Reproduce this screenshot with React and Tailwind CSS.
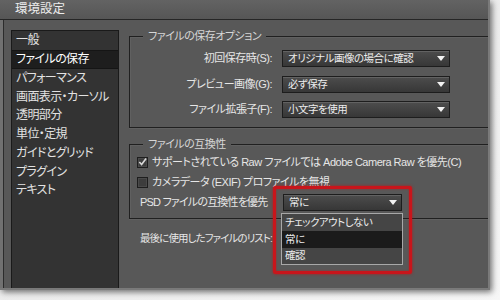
import React from "react";

const FONT = "font-['Liberation_Sans','Noto_Sans_CJK_JP',sans-serif] [font-feature-settings:'palt']";

const menuItems = [
  "一般",
  "ファイルの保存",
  "パフォーマンス",
  "画面表示・カーソル",
  "透明部分",
  "単位・定規",
  "ガイドとグリッド",
  "プラグイン",
  "テキスト",
];

const Arrow = () => (
  <svg width="8" height="5" viewBox="0 0 8 5" className="shrink-0">
    <path d="M0 0 L8 0 L4 5 Z" fill="#f2f2f2" />
  </svg>
);

const Select = ({ value, width }) => (
  <div
    className={`flex items-center justify-between h-[17px] ${width} shrink-0 border border-[#1d1d1d] bg-gradient-to-b from-[#4d4d4d] to-[#373737] shadow-[inset_0_1px_0_#626262] pl-[5px] pr-[4px] text-[10.5px] text-[#ececec]`}
  >
    <span className="leading-none">{value}</span>
    <Arrow />
  </div>
);

const Checkbox = ({ checked }) => (
  <div className="w-[11px] h-[11px] shrink-0 border border-[#1e1e1e] bg-[#3d3d3d] shadow-[inset_0_0_0_1px_#4a4a4a] flex items-center justify-center">
    {checked && (
      <svg width="10" height="10" viewBox="0 0 10 10">
        <path d="M1.5 5 L4 7.8 L9 1" stroke="#d8d8d8" strokeWidth="1.8" fill="none" />
      </svg>
    )}
  </div>
);

const GroupBox = ({ title, className, children }) => (
  <div
    className={`relative border-t border-l border-b border-[#202020] shadow-[inset_1px_1px_0_#606060,0_1px_0_#606060] ${className}`}
  >
    <span className="absolute left-[13px] top-[-9px] px-[5px] bg-[#585858] text-[#d6d6d6] leading-[16px]">
      {title}
    </span>
    {children}
  </div>
);

export default function App() {
  return (
    <div className={`w-[500px] h-[300px] overflow-hidden bg-gradient-to-br from-[#e2e2e2] to-[#f7f7f7] ${FONT} text-[11px] tracking-[-0.5px] text-[#e6e6e6]`}>
      <div className="w-[490px] h-[290px] overflow-hidden flex flex-col bg-[#585858] border-r-2 border-b-2 border-[#7a7a7a] shadow-[2px_2px_6px_rgba(0,0,0,0.55)]">
        {/* Title bar */}
        <div className="h-[20px] shrink-0 flex items-center pl-[15px] bg-gradient-to-b from-[#636363] to-[#565656] border-b border-[#262626] text-[#ececec] text-[12.5px] tracking-normal">
          環境設定
        </div>

        <div className="flex flex-1 min-h-0 min-w-0 border-l-[3px] border-[#717171]">
          <div className="flex flex-1 min-h-0 min-w-0 border-l border-[#2c2c2c]">
            {/* Left list */}
            <div className="ml-[7px] mt-[10px] w-[108px] shrink-0 bg-[#333] border border-[#1a1a1a] border-b-0 flex flex-col text-[12px] tracking-[-0.6px]">
              {menuItems.map((item, i) => (
                <div
                  key={item}
                  className={`h-[18.75px] flex items-center pl-[4px] whitespace-nowrap ${
                    i === 1 ? "bg-[#1e1e1e] border-y border-[#151515] text-white" : "text-[#e2e2e2]"
                  }`}
                >
                  {item}
                </div>
              ))}
            </div>

            {/* Right content */}
            <div className="flex-1 min-w-0 ml-[10px] flex flex-col pt-[16px]">
              <GroupBox title="ファイルの保存オプション" className="h-[92px]">
                <div className="flex flex-col gap-[8.5px] pt-[13px]">
                  {[
                    ["初回保存時(S):", "オリジナル画像の場合に確認"],
                    ["プレビュー画像(G):", "必ず保存"],
                    ["ファイル拡張子(F):", "小文字を使用"],
                  ].map(([label, value]) => (
                    <div key={label} className="flex items-center h-[17px]">
                      <span className="w-[142px] text-right whitespace-nowrap">{label}</span>
                      <div className="ml-[10px]">
                        <Select value={value} width="w-[168px]" />
                      </div>
                    </div>
                  ))}
                </div>
              </GroupBox>

              <GroupBox title="ファイルの互換性" className="mt-[16px] h-[75px]">
                <div className="flex flex-col pt-[11px] pl-[7px]">
                  <div className="flex items-center gap-[4px] h-[12px] whitespace-nowrap">
                    <Checkbox checked />
                    <span>サポートされている Raw ファイルでは Adobe Camera Raw を優先(C)</span>
                  </div>
                  <div className="flex items-center gap-[4px] h-[12px] mt-[8px] whitespace-nowrap">
                    <Checkbox />
                    <span>カメラデータ (EXIF) プロファイルを無視</span>
                  </div>
                  <div className="flex items-center h-[17px] mt-[6px] pl-[3px]">
                    <span className="w-[143px] whitespace-nowrap tracking-[-0.8px]">PSD ファイルの互換性を優先</span>
                    <div className="relative">
                      <Select value="常に" width="w-[119px]" />
                      {/* highlight */}
                      <div className="absolute left-[-10px] top-[-8px] w-[139px] h-[88px] border-[3px] border-[#c8151b] rounded-[2px] shadow-[0_0_3px_rgba(220,0,0,0.7),inset_0_0_2px_rgba(220,0,0,0.6)] z-20" />
                      {/* dropdown list */}
                      <div className="absolute left-[-2px] top-[19px] w-[122px] h-[52px] bg-[#454545] border border-[#a8a8a8] z-10 flex flex-col text-[10.5px] text-[#ececec]">
                        <div className="h-[17px] flex items-center pl-[3px] whitespace-nowrap">チェックアウトしない</div>
                        <div className="h-[17px] flex items-center pl-[3px] bg-[#1b1b1b]">常に</div>
                        <div className="h-[16px] flex items-center pl-[3px]">確認</div>
                      </div>
                    </div>
                  </div>
                </div>
              </GroupBox>

              <div className="mt-[11px] pl-[11px] h-[17px] flex items-center whitespace-nowrap text-[10.5px] tracking-[-0.9px]">
                最後に使用したファイルのリスト:
              </div>
            </div>
          </div>
        </div>
      </div>
    </div>
  );
}
